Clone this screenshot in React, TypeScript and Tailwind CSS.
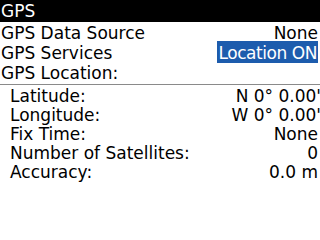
import React from "react";

const top = [
  { label: "GPS Data Source", value: "None", hl: false },
  { label: "GPS Services", value: "Location ON", hl: true },
  { label: "GPS Location:", value: "", hl: false },
];

const bottom = [
  { label: "Latitude:", value: "N 0° 0.00'", cut: true },
  { label: "Longitude:", value: "W 0° 0.00'", cut: true },
  { label: "Fix Time:", value: "None", cut: false },
  { label: "Number of Satellites:", value: "0", cut: false },
  { label: "Accuracy:", value: "0.0 m", cut: false },
];

export default function App() {
  return (
    <div
      className="w-[320px] h-[240px] bg-white text-black overflow-hidden text-[17px]"
      style={{ fontFamily: '"DejaVu Sans", sans-serif' }}
    >
      <div className="h-[22px] bg-black text-white pl-[1px] leading-[22px]">GPS</div>
      {top.map((r) => (
        <div key={r.label} className="h-[20px] flex items-center justify-between pl-[1px] pr-[2px] leading-[20px] pt-[2px]">
          <span>{r.label}</span>
          {r.value && (
            <span className={r.hl ? "bg-[#1d5cad] text-white pl-[2px] pr-[1px] tracking-[-0.45px] leading-[20px] mt-[-2px] pt-[2px]" : ""}>{r.value}</span>
          )}
        </div>
      ))}
      <div className="h-[2px]" />
      <div className="h-[1px] bg-[#8a8a8a]" />
      <div className="h-[2px]" />
      {bottom.map((r) => (
        <div key={r.label} className="h-[19px] flex items-center justify-between pl-[10px] pr-[2px] leading-[19px]">
          <span>{r.label}</span>
          <span className={r.cut ? "mr-[-3px]" : ""}>{r.value}</span>
        </div>
      ))}
    </div>
  );
}
